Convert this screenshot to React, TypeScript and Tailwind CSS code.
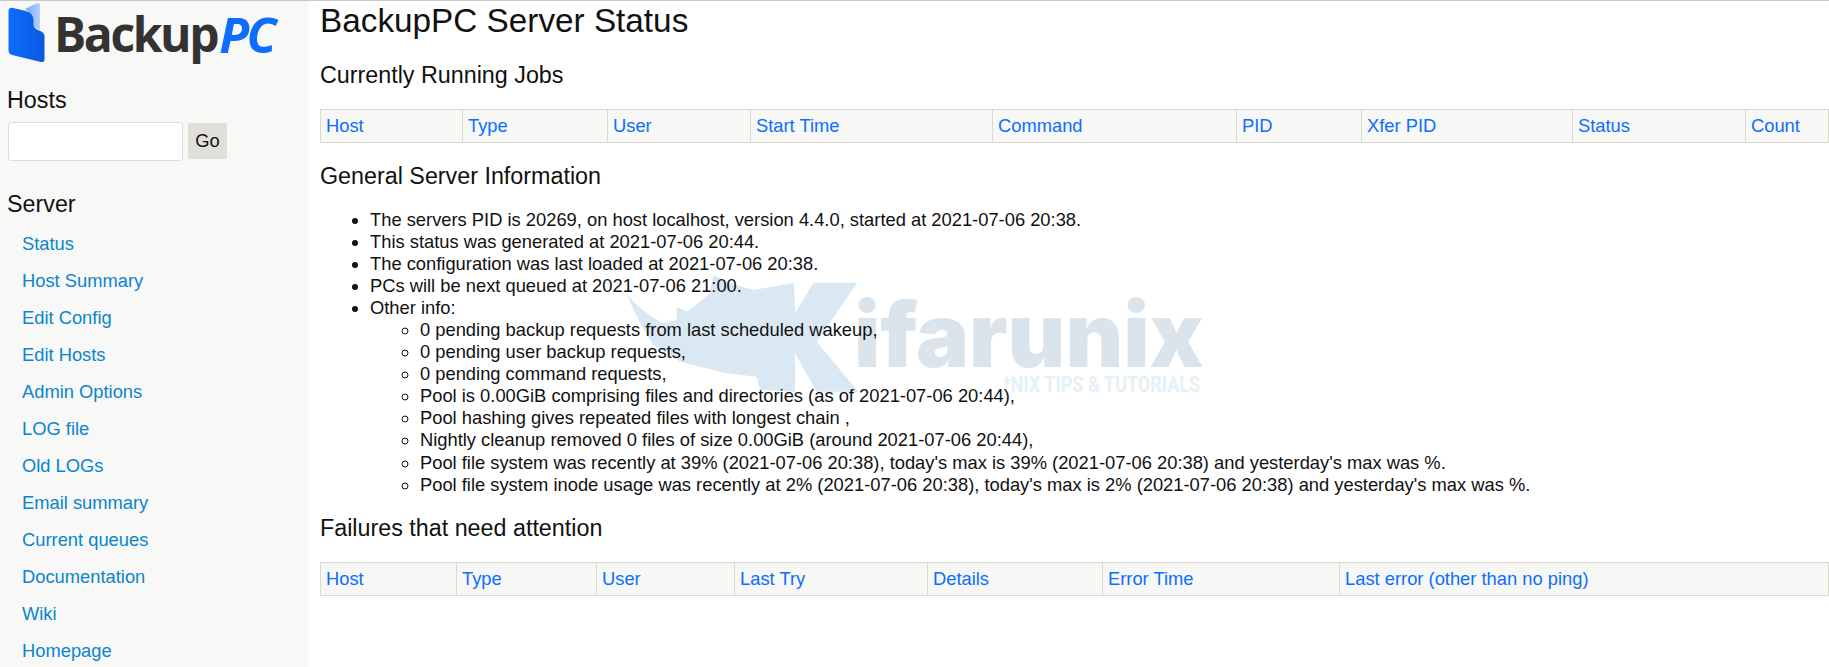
const runningCols = [
  { label: 'Host', width: 142 },
  { label: 'Type', width: 145 },
  { label: 'User', width: 143 },
  { label: 'Start Time', width: 242 },
  { label: 'Command', width: 244 },
  { label: 'PID', width: 125 },
  { label: 'Xfer PID', width: 211 },
  { label: 'Status', width: 173 },
  { label: 'Count', width: 120 },
];

const failureCols = [
  { label: 'Host', width: 136 },
  { label: 'Type', width: 140 },
  { label: 'User', width: 138 },
  { label: 'Last Try', width: 193 },
  { label: 'Details', width: 175 },
  { label: 'Error Time', width: 237 },
  { label: 'Last error (other than no ping)', width: 500 },
];

const serverLinks = [
  'Status',
  'Host Summary',
  'Edit Config',
  'Edit Hosts',
  'Admin Options',
  'LOG file',
  'Old LOGs',
  'Email summary',
  'Current queues',
  'Documentation',
  'Wiki',
  'Homepage',
];

const otherInfo = [
  '0 pending backup requests from last scheduled wakeup,',
  '0 pending user backup requests,',
  '0 pending command requests,',
  'Pool is 0.00GiB comprising files and directories (as of 2021-07-06 20:44),',
  'Pool hashing gives repeated files with longest chain ,',
  'Nightly cleanup removed 0 files of size 0.00GiB (around 2021-07-06 20:44),',
  "Pool file system was recently at 39% (2021-07-06 20:38), today's max is 39% (2021-07-06 20:38) and yesterday's max was %.",
  "Pool file system inode usage was recently at 2% (2021-07-06 20:38), today's max is 2% (2021-07-06 20:38) and yesterday's max was %.",
];

function HeaderTable({ cols }: { cols: { label: string; width: number }[] }) {
  return (
    <div className="flex h-[34px] border border-[#d9d9d0] bg-[#f7f7f5]">
      {cols.map((col) => (
        <div
          key={col.label}
          style={{ width: col.width }}
          className="shrink-0 border-r border-[#d9d9d0] pl-[5px] text-[18.34px] leading-[32px] text-[#0d6efd]"
        >
          {col.label}
        </div>
      ))}
    </div>
  );
}

function Logo() {
  return (
    <div className="flex h-[62px] items-start">
      <svg width="38" height="62" viewBox="8 1 38 62" className="ml-[1px] shrink-0">
        <defs>
          <linearGradient id="front" x1="0" x2="1" y1="0" y2="0">
            <stop offset="0" stopColor="#0d6efd" />
            <stop offset="1" stopColor="#0a58e0" />
          </linearGradient>
          <linearGradient id="back" x1="0" x2="1" y1="0" y2="0">
            <stop offset="0" stopColor="#6ea8fb" />
            <stop offset="1" stopColor="#b4d2fc" />
          </linearGradient>
        </defs>
        <path d="M25 9 L36 3.5 Q40 2 40 5 L40 30 L33 26 Q33 13 25 9 Z" fill="url(#back)" />
        <path
          d="M8.5 11 Q9 7 13 8 L26 11 Q33 13 33.5 20 L33.5 25 Q34 28 38 30 Q44.5 32 44.5 36 L44.5 60 Q44.5 62.5 41 62 L12 55 Q8.5 54 8.5 50 Z"
          fill="url(#front)"
        />
      </svg>
      <div className="ml-[8px] mt-[2px] flex font-['Open_Sans',sans-serif] font-bold leading-[62px]">
        <span className="text-[48px] tracking-[-2.4px] text-[#333333]">Backup</span>
        <span className="ml-[2px] text-[49px] italic tracking-[-2.5px] text-[#0d6efd]">PC</span>
      </div>
    </div>
  );
}

export default function App() {
  return (
    <div className="relative flex h-[667px] w-[1829px] overflow-hidden border-t border-[#c8c8c8] bg-white font-['Liberation_Sans',Arial,sans-serif] text-[18.34px] text-[#111111]">
      <aside className="flex w-[308px] shrink-0 flex-col bg-[#f8f8f6] pl-[7px]">
        <Logo />
        <h2 className="mt-[23px] text-[23.3px] leading-[28px]">Hosts</h2>
        <div className="mt-[8px] flex items-start gap-[5px] pl-[1px]">
          <input className="h-[39px] w-[175px] rounded-[3px] border border-[#dddddd] bg-white" />
          <button className="mt-[1px] h-[36px] w-[39px] rounded-[2px] bg-[#e0e0d9] text-[18.34px]">Go</button>
        </div>
        <h2 className="mt-[29px] text-[23.3px] leading-[28px]">Server</h2>
        <nav className="mt-[7px] flex flex-col pl-[15px]">
          {serverLinks.map((link) => (
            <a key={link} className="h-[37px] text-[18.34px] leading-[37px] text-[#0a85cf]">
              {link}
            </a>
          ))}
        </nav>
      </aside>

      <main className="relative min-w-0 flex-1 pl-[12px]">
        <h1 className="mt-[1px] text-[33.3px] leading-[37px]">BackupPC Server Status</h1>
        <h2 className="mt-[22px] text-[23.3px] leading-[28px]">Currently Running Jobs</h2>
        <div className="mt-[20px]">
          <HeaderTable cols={runningCols} />
        </div>
        <h2 className="mt-[19px] text-[23.3px] leading-[28px]">General Server Information</h2>
        <ul className="relative z-10 mt-[19px] list-disc pl-[50px] leading-[22.05px]">
          <li>The servers PID is 20269, on host localhost, version 4.4.0, started at 2021-07-06 20:38.</li>
          <li>This status was generated at 2021-07-06 20:44.</li>
          <li>The configuration was last loaded at 2021-07-06 20:38.</li>
          <li>PCs will be next queued at 2021-07-06 21:00.</li>
          <li>
            Other info:
            <ul className="list-[circle] pl-[50px]">
              {otherInfo.map((line) => (
                <li key={line}>{line}</li>
              ))}
            </ul>
          </li>
        </ul>
        <h2 className="mt-[18px] text-[23.3px] leading-[28px]">Failures that need attention</h2>
        <div className="mt-[20px]">
          <HeaderTable cols={failureCols} />
        </div>

        {/* Watermark sits behind the list text */}
        <svg width="260" height="160" viewBox="0 0 780 480" className="pointer-events-none absolute left-[312px] top-[269px]">
          <path
            d="M22 75 Q70 130 130 160 L170 150 L170 110 L200 125 L235 100 L270 70 L280 15 L330 40 L400 60 L522 38 L525 130 L580 38 L712 38 L590 215 L715 365 L590 365 L525 250 L525 365 L420 360 L410 320 L320 310 L180 275 L100 225 Q50 150 22 75 Z"
            fill="#d9e8f3"
          />
        </svg>
        <span className="pointer-events-none absolute left-[546px] top-[289px] font-['Inter',sans-serif] text-[89px] font-black leading-[90px] text-[#dbe4eb]">
          ifarunix
        </span>
        <span className="pointer-events-none absolute right-[629px] top-[372px] origin-right scale-x-[0.82] whitespace-nowrap font-['Roboto',sans-serif] text-[22px] font-bold leading-[24px] text-[#e6f0f7]">
          *NIX TIPS &amp; TUTORIALS
        </span>
      </main>
    </div>
  );
}
